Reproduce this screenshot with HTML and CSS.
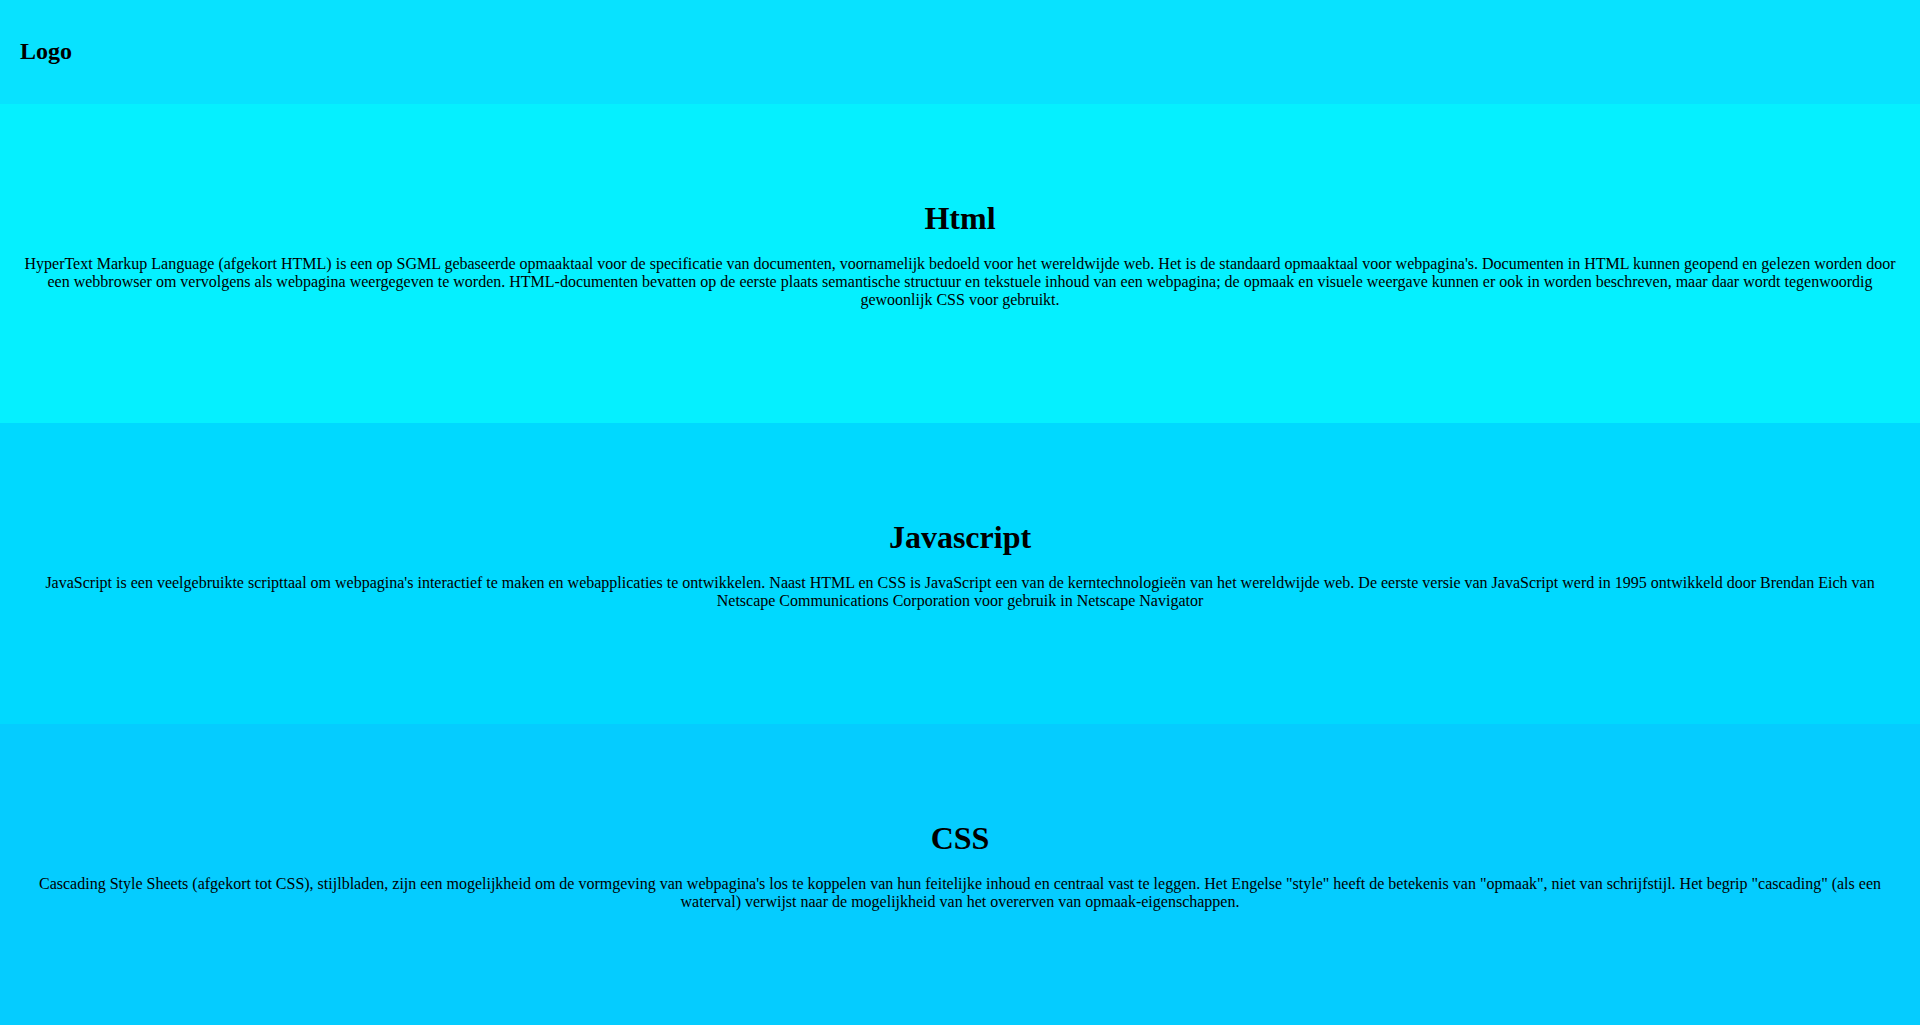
FILE: index.html
```html
<!DOCTYPE html>
<html lang="nl">
<head>
<meta charset="utf-8">
<title>Logo</title>
<link rel="stylesheet" href="styles.css">
</head>
<body>
<header class="site-header">
  <h2 class="logo">Logo</h2>
</header>
<main>
  <section class="block block-html">
    <h1 class="block-title">Html</h1>
    <p class="block-text">HyperText Markup Language (afgekort HTML) is een op SGML gebaseerde opmaaktaal voor de specificatie van documenten, voornamelijk bedoeld voor het wereldwijde web. Het is de standaard opmaaktaal voor webpagina's. Documenten in HTML kunnen geopend en gelezen worden door een webbrowser om vervolgens als webpagina weergegeven te worden. HTML-documenten bevatten op de eerste plaats semantische structuur en tekstuele inhoud van een webpagina; de opmaak en visuele weergave kunnen er ook in worden beschreven, maar daar wordt tegenwoordig gewoonlijk CSS voor gebruikt.</p>
  </section>
  <section class="block block-js">
    <h1 class="block-title">Javascript</h1>
    <p class="block-text">JavaScript is een veelgebruikte scripttaal om webpagina's interactief te maken en webapplicaties te ontwikkelen. Naast HTML en CSS is JavaScript een van de kerntechnologieën van het wereldwijde web. De eerste versie van JavaScript werd in 1995 ontwikkeld door Brendan Eich van Netscape Communications Corporation voor gebruik in Netscape Navigator</p>
  </section>
  <section class="block block-css">
    <h1 class="block-title">CSS</h1>
    <p class="block-text">Cascading Style Sheets (afgekort tot CSS), stijlbladen, zijn een mogelijkheid om de vormgeving van webpagina's los te koppelen van hun feitelijke inhoud en centraal vast te leggen. Het Engelse "style" heeft de betekenis van "opmaak", niet van schrijfstijl. Het begrip "cascading" (als een waterval) verwijst naar de mogelijkheid van het overerven van opmaak-eigenschappen.</p>
  </section>
</main>
</body>
</html>
```

FILE: styles.css
```css
html, body {
  margin: 0;
  padding: 0;
}

body {
  font-family: "Liberation Serif", "Times New Roman", serif;
  font-size: 16px;
  color: #000;
  background: #05ccff;
}

.site-header {
  height: 104px;
  display: flex;
  align-items: center;
  padding: 0 20px;
  background: #08e2ff;
  box-sizing: border-box;
}

.logo {
  margin: -2px 0 0;
  font-size: 24px;
  line-height: 27px;
  font-weight: bold;
}

.block {
  padding: 96px 22px 114px;
  text-align: center;
}

.block-html {
  background: #05f0ff;
}

.block-js {
  background: #00d9ff;
}

.block-css {
  background: #05ccff;
}

.block-title {
  margin: 0 0 18px;
  font-size: 32px;
  line-height: 37px;
  font-weight: bold;
}

.block-text {
  margin: 0;
  font-size: 16px;
  line-height: 18px;
}
```
